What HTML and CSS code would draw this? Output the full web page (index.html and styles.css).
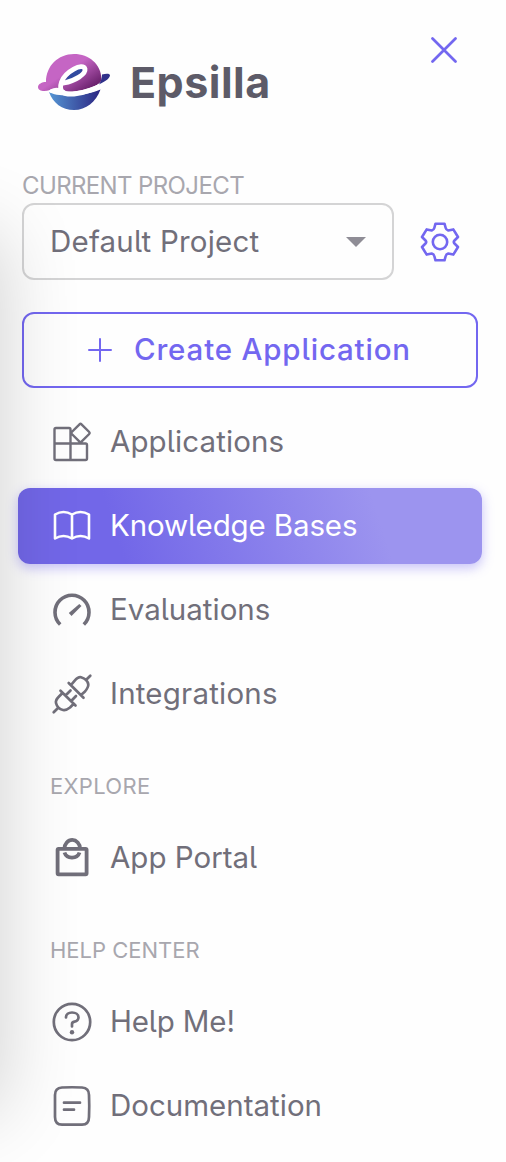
FILE: index.html
```html
<!DOCTYPE html>
<html lang="en">
<head>
<meta charset="utf-8">
<title>Epsilla</title>
<link rel="stylesheet" href="styles.css">
</head>
<body>
<aside class="sidebar">
  <header class="brand">
    <svg class="logo" viewBox="0 0 72 56">
      <defs>
        <linearGradient id="top" x1="0.2" y1="0.2" x2="0.9" y2="0.8"><stop offset="0.4" stop-color="#c565c4"/><stop offset="1" stop-color="#6e2470"/></linearGradient>
        <linearGradient id="bottom" x1="0" y1="0" x2="1" y2="0"><stop offset="0" stop-color="#5596d4"/><stop offset="1" stop-color="#2b2582"/></linearGradient>
      </defs>
      <path d="M11 38C20 44 49 42 62.500 35.500C58 48 48 56 36 56C24 56 15 49 11 38Z" fill="url(#bottom)"/>
      <path d="M8 28C8 12 20 0 36 0C51 0 63 10 63.500 25C64 30 54 34 42 36.500C34 38 28 38 26 36C20 36 16 34 12 36C6 38 0 37 0 33C0 30 4 28 8 28Z" fill="url(#top)"/>
      <path d="M26 28C31 19 39 14 44 14C47 16 41 23 26 28Z" fill="#304a9f"/>
      <path d="M26 29C37 27 48 20 47 15C45 8 27 18 23.500 28C20 38 26 41 36 40C47 39 60 34 66 29" fill="none" stroke="#fff" stroke-width="4.800" stroke-linecap="round"/>
      <path d="M13 37C19 34 22 36 27 39" fill="none" stroke="#fff" stroke-width="3.500"/>
      <path d="M64 20.500C69 19 72 19.500 72 21.500C71 25.500 66 28 61 30.500C63 27 64 24 64 20.500Z" fill="#30318a"/>
    </svg>
    <span class="brand-name">Epsilla</span>
    <svg class="close" viewBox="0 0 26 26"><path d="M1.500 1.500l23 23M24.500 1.500l-23 23"/></svg>
  </header>

  <div class="label label-project"><span>CURRENT PROJECT</span></div>
  <div class="project">
    <div class="select"><span class="t-default">Default Project</span><i class="caret"></i></div>
    <svg class="gear" viewBox="-20 -20 40 40"><path d="M-4.500-18.300H4.500L5.700-14Q6.200-12 8.200-11.500L13.300-12.600 18-5 14.500-1.500Q13 0 14.500 1.500L18 5 13.300 12.600 8.200 11.500Q6.200 12 5.700 14L4.500 18.300H-4.500L-5.700 14Q-6.200 12-8.200 11.500L-13.300 12.600-18 5-14.500 1.500Q-13 0-14.500-1.500L-18-5-13.300-12.600-8.200-11.500Q-6.200-12-5.700-14Z"/><circle r="7.200"/></svg>
  </div>

  <div class="create">
    <svg class="plus" viewBox="0 0 24 24"><path d="M12 1v22M1 12h22"/></svg>
    <span class="t-create">Create Application</span>
  </div>

  <nav class="nav">
    <div class="item">
      <svg class="icon thin" viewBox="0 0 44 44"><path d="M20.500 23.500V9.500a1.500 1.500 0 0 0-1.500-1.500H6a1.500 1.500 0 0 0-1.500 1.500v29a1.500 1.500 0 0 0 1.500 1.500h29.500a1.500 1.500 0 0 0 1.500-1.500V25a1.500 1.500 0 0 0-1.500-1.500H4.500M20.500 23.500V40M29.500 4.300q1-1 2 0l7.700 7.700q1 1 0 2l-7.700 7.700q-1 1-2 0L21.800 14q-1-1 0-2z"/></svg>
      <span class="t-apps">Applications</span>
    </div>
    <div class="item active">
      <svg class="icon book" viewBox="0 0 44 44"><path d="M22 10.500Q13.500 5.500 5 10.500V34.500Q13.500 29.500 22 34.500Q30.500 29.500 39 34.500V10.500Q30.500 5.500 22 10.500ZM22 10.500V34"/></svg>
      <span class="t-kb">Knowledge Bases</span>
    </div>
    <div class="item">
      <svg class="icon bold" viewBox="0 0 44 44"><path d="M10.200 36.500A17 17 0 1 1 33.800 36.500"/><path d="M18.800 25L29.300 16 31.500 18 21.500 28Z" class="fill"/></svg>
      <span class="t-eval">Evaluations</span>
    </div>
    <div class="item">
      <svg class="icon" viewBox="0 0 44 44"><path d="M40.300 3.700L36.500 7.500M18.700 11L33.500 25.700M21 13L24.500 8.800C27 6 29 4.700 31 5.200C35 6.500 38 9.500 38.300 12.500C38.500 15 37 17 35 19.500L31 23M10.500 18.700L25.500 33.500M12.500 21L9 24.500C6.500 27 5.500 29 6 31C7 35 10 37.500 13 38C15.500 38.500 17.500 37.500 20 35.500L23.500 32M15.500 23.500L20.500 18.500M21.200 29L26 24M7.500 36.500L3.700 40.300"/></svg>
      <span class="t-int">Integrations</span>
    </div>
    <div class="label section"><span class="t-exp">EXPLORE</span></div>
    <div class="item">
      <svg class="icon bold bag" viewBox="0 0 44 44"><rect x="7.600" y="12.800" width="29" height="25.500" rx="1"/><path d="M14.500 12.500A7.700 8.500 0 0 1 30 12.500M14.500 16.500A7.800 7 0 0 0 29.500 16.500"/></svg>
      <span class="t-portal">App Portal</span>
    </div>
    <div class="label section"><span class="t-hc">HELP CENTER</span></div>
    <div class="item">
      <svg class="icon" viewBox="0 0 44 44"><circle cx="22" cy="22" r="18.200"/><path d="M16 17.500v-.5c0-2.700 2.400-4.500 6-4.500s6.500 1.800 6.500 4.700c0 2.500-1.500 3.900-4 4.400-2 .4-2.500 1.100-2.500 2.400v2.500"/><circle cx="22" cy="32.300" r="2.200" class="fill"/></svg>
      <span class="t-help">Help Me!</span>
    </div>
    <div class="item">
      <svg class="icon" viewBox="0 0 44 44"><path d="M12 3.500Q22 3 32 3.500Q39 4 39 11Q39.500 22 39 33Q39 40.500 32 40.700H12Q5 40.500 5 33V11Q5 4 12 3.500ZM14 18.700H30M14 25.700H24"/></svg>
      <span class="t-doc">Documentation</span>
    </div>
  </nav>
  <div class="edge-shadow"></div>
</aside>
</body>
</html>
```
FILE: styles.css
```css
* { box-sizing: border-box; }
body { margin: 0; background: #fefefe; }
.sidebar {
  position: relative;
  width: 506px;
  height: 1162px;
  overflow: hidden;
  padding: 32px 18px 0;
  font-family: Inter, "Liberation Sans", sans-serif;
  font-feature-settings: "cv05";
  font-size: 29.500px;
  color: #716f7a;
}
span { white-space: nowrap; }
svg { flex: none; fill: none; stroke: currentColor; stroke-linecap: round; stroke-linejoin: round; }
.brand { display: flex; align-items: center; height: 100px; padding: 0 31px 0 20px; }
.logo { width: 72px; height: 56px; stroke: none; }
.brand-name {
  margin-left: 20px;
  font-size: 43px; font-weight: 700; letter-spacing: 0.500px;
  font-feature-settings: normal; color: #5d5b68;
}
.close { width: 26px; height: 26px; margin: 5px 0 0 auto; align-self: flex-start; color: #7367f0; stroke-width: 2.700; }
.label { color: #a8a7ae; line-height: 36px; }
.label-project { margin-top: 36px; padding-left: 4px; height: 35px; font-size: 24px; letter-spacing: -0.620px; }
.project { display: flex; align-items: center; padding-left: 4px; }
.select {
  display: flex; align-items: center; justify-content: space-between;
  width: 372px; height: 77px; padding: 0 26px;
  border: 2px solid #d4d4d5; border-radius: 12px;
}
.t-default { letter-spacing: 0.200px; }
.item span, .select span, .create span { padding-bottom: 2px; }
.caret { border: 10px solid transparent; border-top-color: #8f8d96; border-bottom: 0; }
.gear { width: 40px; height: 40px; margin-left: 26px; color: #7367f0; stroke-width: 2.600; }
.create {
  display: flex; align-items: center;
  width: 456px; height: 76px; margin: 32px 10px 0 4px; padding-left: 64px;
  border: 2px solid #7367f0; border-radius: 12px;
  color: #7367f0; font-weight: 500; letter-spacing: 0.820px;
}
.plus { width: 24px; height: 24px; margin-right: 22px; stroke-width: 2; }
.nav { display: flex; flex-direction: column; gap: 8px; width: 464px; margin-top: 16px; }
.item { display: flex; align-items: center; gap: 16px; height: 76px; padding-left: 32px; border-radius: 12px; }
.t-apps { letter-spacing: 0.100px; }
.t-kb { letter-spacing: -0.130px; }
.t-int { letter-spacing: 0.220px; }
.t-help { letter-spacing: -0.150px; }
.t-exp { letter-spacing: 0.300px; }
.active {
  color: #fff;
  background: linear-gradient(72deg, #7267e8 22%, #9c94ef 77%);
  box-shadow: 0 4px 12px rgba(115, 103, 240, 0.4);
}
.icon { width: 44px; height: 44px; stroke-width: 2.700; }
.thin { stroke-width: 2.400; }
.book { stroke-width: 2.600; }
.bold { stroke-width: 3.600; stroke-linecap: butt; }
.bag { stroke-width: 3.800; }
.fill { fill: currentColor; stroke: none; }
.section { height: 72px; padding: 28px 0 0 32px; font-size: 22px; line-height: 36px; }
.edge-shadow {
  position: absolute; left: -100px; top: 234px; width: 100px; height: 878px;
  box-shadow: 0 0 80px rgba(0, 0, 0, 0.190);
  pointer-events: none;
}
```
